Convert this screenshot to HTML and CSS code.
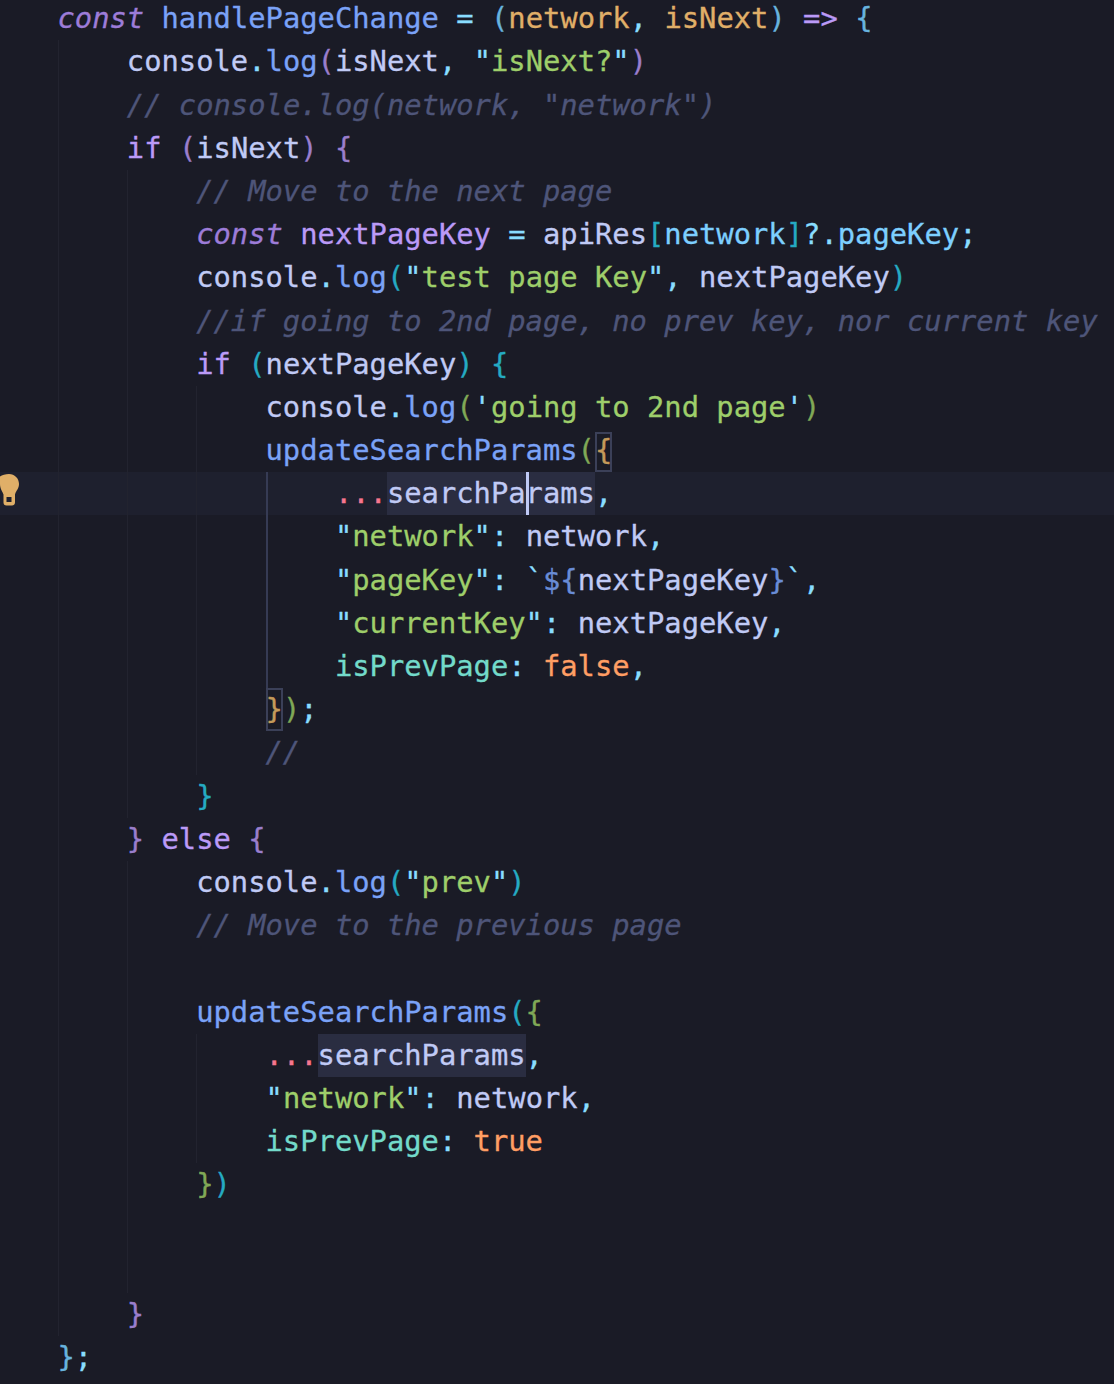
FILE: index.html
```html
<!DOCTYPE html>
<html lang="en">
<head>
<meta charset="utf-8">
<title>Editor</title>
<link rel="stylesheet" href="styles.css">
</head>
<body>
<main class="editor">
<div class="line"><code class="code"><i class="kw">const</i> <span class="fn">handlePageChange</span> <span class="op">=</span> <span class="b2">(</span><span class="par">network</span><span class="op">,</span> <span class="par">isNext</span><span class="b2">)</span> <span class="kwp">=&gt;</span> <span class="b2">{</span></code></div>
<div class="line"><span class="ind"></span><code class="code"><span class="tx">console</span><span class="op">.</span><span class="fn">log</span><span class="b3">(</span><span class="tx">isNext</span><span class="op">,</span> <span class="op">"</span><span class="str">isNext?</span><span class="op">"</span><span class="b3">)</span></code></div>
<div class="line"><span class="ind"></span><code class="code cm">// console.log(network, "network")</code></div>
<div class="line"><span class="ind"></span><code class="code"><span class="kwp">if</span> <span class="b3">(</span><span class="tx">isNext</span><span class="b3">)</span> <span class="b3">{</span></code></div>
<div class="line"><span class="ind"></span><span class="ind"></span><code class="code cm">// Move to the next page</code></div>
<div class="line"><span class="ind"></span><span class="ind"></span><code class="code"><i class="kw">const</i> <span class="kwp">nextPageKey</span> <span class="op">=</span> <span class="tx">apiRes</span><span class="b4">[</span><span class="prop">network</span><span class="b4">]</span><span class="op">?.</span><span class="prop">pageKey</span><span class="op">;</span></code></div>
<div class="line"><span class="ind"></span><span class="ind"></span><code class="code"><span class="tx">console</span><span class="op">.</span><span class="fn">log</span><span class="b4">(</span><span class="op">"</span><span class="str">test page Key</span><span class="op">",</span> <span class="tx">nextPageKey</span><span class="b4">)</span></code></div>
<div class="line"><span class="ind"></span><span class="ind"></span><code class="code cm">//if going to 2nd page, no prev key, nor current key</code></div>
<div class="line"><span class="ind"></span><span class="ind"></span><code class="code"><span class="kwp">if</span> <span class="b4">(</span><span class="tx">nextPageKey</span><span class="b4">)</span> <span class="b4">{</span></code></div>
<div class="line"><span class="ind"></span><span class="ind"></span><span class="ind"></span><code class="code"><span class="tx">console</span><span class="op">.</span><span class="fn">log</span><span class="b5">(</span><span class="op">'</span><span class="str">going to 2nd page</span><span class="op">'</span><span class="b5">)</span></code></div>
<div class="line"><span class="ind"></span><span class="ind"></span><span class="ind"></span><code class="code"><span class="fn">updateSearchParams</span><span class="b5">(</span><span class="b6 match match-open">{</span></code></div>
<div class="line active">
<svg class="bulb" viewBox="0 0 20 32" aria-hidden="true"><path class="bulb-fill" fill-rule="evenodd" d="M9 0C14.6 0 19 4.4 19 10C19 14.4 16.2 16.6 15 20.5V28.5C15 30.4 13.6 31.5 12 31.5H6.5C4.6 31.5 3.5 30.4 3.5 28.5V20.5C2.6 17.5 0 15 0 10V2.5C2 1 5.5 0 9 0ZM6.5 23V28H11.5V23Z"/></svg>
<span class="ind"></span><span class="ind"></span><span class="ind"></span><span class="ind ind-active"></span><code class="code"><span class="spread">...</span><span class="sel"><span class="tx">searchParams</span><span class="cursor"></span></span><span class="op">,</span></code></div>
<div class="line"><span class="ind"></span><span class="ind"></span><span class="ind"></span><span class="ind ind-active"></span><code class="code"><span class="op">"</span><span class="str">network</span><span class="op">":</span> <span class="tx">network</span><span class="op">,</span></code></div>
<div class="line"><span class="ind"></span><span class="ind"></span><span class="ind"></span><span class="ind ind-active"></span><code class="code"><span class="op">"</span><span class="str">pageKey</span><span class="op">":</span> <span class="op">`</span><span class="b1">${</span><span class="tx">nextPageKey</span><span class="b1">}</span><span class="op">`,</span></code></div>
<div class="line"><span class="ind"></span><span class="ind"></span><span class="ind"></span><span class="ind ind-active"></span><code class="code"><span class="op">"</span><span class="str">currentKey</span><span class="op">":</span> <span class="tx">nextPageKey</span><span class="op">,</span></code></div>
<div class="line"><span class="ind"></span><span class="ind"></span><span class="ind"></span><span class="ind ind-active"></span><code class="code"><span class="key">isPrevPage</span><span class="op">:</span> <span class="lit">false</span><span class="op">,</span></code></div>
<div class="line"><span class="ind"></span><span class="ind"></span><span class="ind"></span><code class="code"><span class="b6 match match-close">}</span><span class="b5">)</span><span class="op">;</span></code></div>
<div class="line"><span class="ind"></span><span class="ind"></span><span class="ind"></span><code class="code cm">//</code></div>
<div class="line"><span class="ind"></span><span class="ind"></span><code class="code"><span class="b4">}</span></code></div>
<div class="line"><span class="ind"></span><code class="code"><span class="b3">}</span> <span class="kwp">else</span> <span class="b3">{</span></code></div>
<div class="line"><span class="ind"></span><span class="ind"></span><code class="code"><span class="tx">console</span><span class="op">.</span><span class="fn">log</span><span class="b4">(</span><span class="op">"</span><span class="str">prev</span><span class="op">"</span><span class="b4">)</span></code></div>
<div class="line"><span class="ind"></span><span class="ind"></span><code class="code cm">// Move to the previous page</code></div>
<div class="line"><span class="ind"></span><span class="ind"></span></div>
<div class="line"><span class="ind"></span><span class="ind"></span><code class="code"><span class="fn">updateSearchParams</span><span class="b4">(</span><span class="b5">{</span></code></div>
<div class="line"><span class="ind"></span><span class="ind"></span><span class="ind"></span><code class="code"><span class="spread">...</span><span class="sel"><span class="tx">searchParams</span></span><span class="op">,</span></code></div>
<div class="line"><span class="ind"></span><span class="ind"></span><span class="ind"></span><code class="code"><span class="op">"</span><span class="str">network</span><span class="op">":</span> <span class="tx">network</span><span class="op">,</span></code></div>
<div class="line"><span class="ind"></span><span class="ind"></span><span class="ind"></span><code class="code"><span class="key">isPrevPage</span><span class="op">:</span> <span class="lit">true</span></code></div>
<div class="line"><span class="ind"></span><span class="ind"></span><code class="code"><span class="b5">}</span><span class="b4">)</span></code></div>
<div class="line"><span class="ind"></span><span class="ind"></span></div>
<div class="line"><span class="ind"></span><span class="ind"></span></div>
<div class="line"><span class="ind"></span><code class="code"><span class="b3">}</span></code></div>
<div class="line"><code class="code"><span class="b2">}</span><span class="op">;</span></code></div>
</main>
</body>
</html>
```
FILE: styles.css
```css
html, body {
  margin: 0;
  height: 100%;
  background: #1a1b26;
  overflow: hidden;
}

.editor {
  margin-top: -2.8px;
  font-family: "DejaVu Sans Mono", "Liberation Mono", monospace;
  font-size: 28.8px;
  color: #c0caf5;
  -webkit-text-stroke: 0.3px currentColor;
}

.line {
  position: relative;
  display: flex;
  height: 43.2px;
  padding-left: 57.5px;
  line-height: 43.2px;
}

.active {
  background: #1e202e;
}

.code {
  font: inherit;
  white-space: pre;
}

.ind {
  flex: none;
  width: 4ch;
  box-shadow: inset 1px 0 0 #22232f;
}

.ind-active {
  box-shadow: inset 2px 0 0 #363b54;
}

.bulb {
  position: absolute;
  left: 0;
  top: 2px;
  width: 20px;
  height: 32px;
}

.bulb-fill { fill: #e0af68; }

.sel {
  position: relative;
  display: inline-block;
  background: #2a2d41;
}

.cursor {
  position: absolute;
  left: 8ch;
  top: 0;
  bottom: 0;
  width: 3px;
  background: #c0caf5;
}

.match {
  display: inline-block;
  box-shadow: inset 0 0 0 2px #3b4058;
}

.match-open { height: 40px; line-height: 37px; vertical-align: bottom; }
.match-close { height: 43px; }

i { font-style: italic; }

.kw { color: #9d7cd8; }
.kwp { color: #bb9af7; }
.fn { color: #7aa2f7; }
.op { color: #89ddff; }
.par { color: #e0af68; }
.tx { color: #c0caf5; }
.prop { color: #7dcfff; }
.str { color: #9ece6a; }
.key { color: #73daca; }
.lit { color: #ff9e64; }
.spread { color: #f7768e; }
.cm { color: #4e5579; font-style: italic; }

.b1 { color: #698cd6; }
.b2 { color: #68b3de; }
.b3 { color: #9a7ecc; }
.b4 { color: #25aac2; }
.b5 { color: #80a856; }
.b6 { color: #c49a5a; }
```
